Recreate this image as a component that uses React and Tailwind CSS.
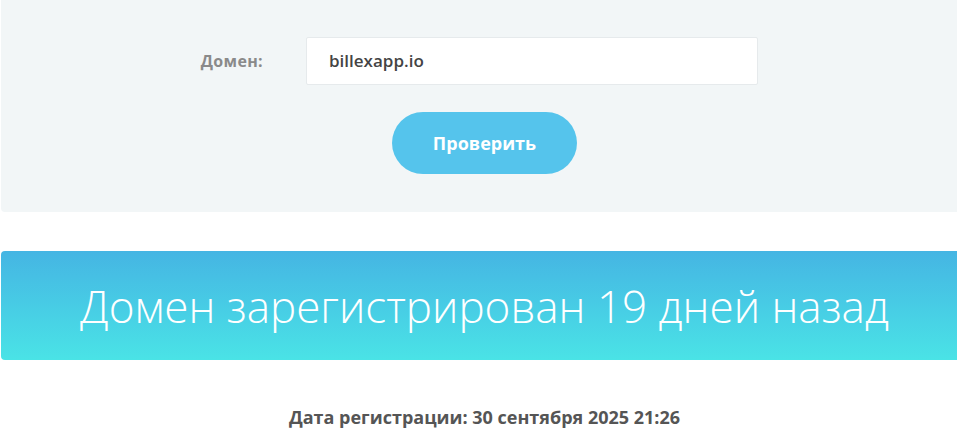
export default function App() {
  return (
    <div className="w-[957px] h-[445px] overflow-hidden bg-white" style={{ fontFamily: '"Open Sans", "DejaVu Sans", sans-serif' }}>
      <div className="w-[967px] ml-px">
        {/* Check form */}
        <div className="bg-[#f2f6f7] rounded-b-[4px] h-[212px] pt-[37px] flex flex-col items-center">
          <div className="flex items-center w-full">
            <label className="w-[262px] text-right text-[16px] font-bold tracking-[0.02em] text-[#8a8a8a]">Домен:</label>
            <div className="ml-[43px] w-[452px] h-[48px] bg-white border border-[#e6eaec] rounded-[2px] flex items-center pl-[22px]">
              <span className="text-[17px] font-semibold text-[#444]">billexapp.io</span>
            </div>
          </div>
          <button className="mt-[27px] w-[185px] h-[62px] rounded-full bg-[#55c4ec] text-white text-[18px] font-bold">
            Проверить
          </button>
        </div>

        {/* Result */}
        <div className="mt-[39px] h-[109px] rounded-[4px] bg-gradient-to-b from-[#45b5e3] to-[#4ae3e6] flex items-center justify-center">
          <h2 className="text-white text-[44px] font-light">Домен зарегистрирован 19 дней назад</h2>
        </div>

        <p className="mt-[44px] text-center text-[18px] font-bold text-[#555]">
          Дата регистрации: 30 сентября 2025 21:26
        </p>
      </div>
    </div>
  );
}
